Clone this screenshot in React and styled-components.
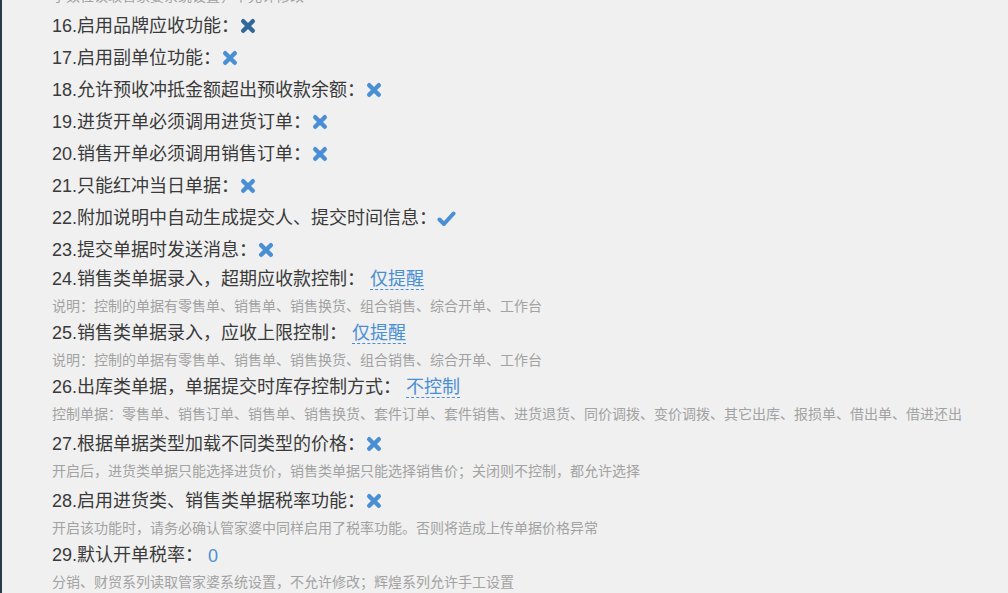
import React from 'react';
import styled, { createGlobalStyle } from 'styled-components';

const GlobalStyle = createGlobalStyle`
  html, body {
    margin: 0;
    padding: 0;
    height: 100%;
    overflow: hidden;
  }
  body {
    background: #f0f0f0;
    font-family: "Liberation Sans", "Noto Sans CJK SC", sans-serif;
  }
`;

const Page = styled.div`
  min-height: 100vh;
  border-left: 2px solid #2b3a49;
  background: #f0f0f0;
  padding-left: 50px;
  box-sizing: border-box;
`;

const List = styled.div`
  margin-top: -16px;
  display: flex;
  flex-direction: column;
`;

const Title = styled.div`
  font-size: 18px;
  color: #3a3a3a;
  line-height: ${(p) => (p.$icon ? '30px' : '29px')};
  padding-top: ${(p) => (p.$icon ? '2px' : '0')};
  white-space: nowrap;
  display: flex;
  align-items: center;
`;

const Desc = styled.div`
  font-size: 14px;
  color: #a2a2a2;
  line-height: 25px;
  white-space: nowrap;
`;

const Editable = styled.span`
  display: inline-block;
  margin-left: 5px;
  line-height: 20px;
  color: #4a8fd4;
  border-bottom: ${(p) => (p.$plain ? 'none' : '1px dashed #4a8fd4')};
`;

const IconWrap = styled.span`
  display: inline-flex;
  align-items: center;
  margin-left: ${(p) => (p.$check ? '0' : '1px')};
  color: ${(p) => (p.$dark ? '#30689b' : '#4a8fd4')};
`;

const Cross = () => (
  <svg width="16" height="16" viewBox="0 0 16 16">
    <path
      d="M3.2 3.2 L12.8 12.8 M12.8 3.2 L3.2 12.8"
      stroke="currentColor"
      strokeWidth="4.4"
      strokeLinecap="round"
      fill="none"
    />
  </svg>
);

const Check = () => (
  <svg width="19" height="17" viewBox="0 0 19 17">
    <path
      d="M2.5 9.5 L7 14 L16.5 3.5"
      stroke="currentColor"
      strokeWidth="4"
      strokeLinecap="round"
      strokeLinejoin="round"
      fill="none"
    />
  </svg>
);

const items = [
  { n: 16, label: '启用品牌应收功能', icon: 'x', dark: true },
  { n: 17, label: '启用副单位功能', icon: 'x' },
  { n: 18, label: '允许预收冲抵金额超出预收款余额', icon: 'x' },
  { n: 19, label: '进货开单必须调用进货订单', icon: 'x' },
  { n: 20, label: '销售开单必须调用销售订单', icon: 'x' },
  { n: 21, label: '只能红冲当日单据', icon: 'x' },
  { n: 22, label: '附加说明中自动生成提交人、提交时间信息', icon: 'check' },
  { n: 23, label: '提交单据时发送消息', icon: 'x' },
  {
    n: 24,
    label: '销售类单据录入，超期应收款控制',
    value: '仅提醒',
    desc: '说明：控制的单据有零售单、销售单、销售换货、组合销售、综合开单、工作台',
  },
  {
    n: 25,
    label: '销售类单据录入，应收上限控制',
    value: '仅提醒',
    desc: '说明：控制的单据有零售单、销售单、销售换货、组合销售、综合开单、工作台',
  },
  {
    n: 26,
    label: '出库类单据，单据提交时库存控制方式',
    value: '不控制',
    desc: '控制单据：零售单、销售订单、销售单、销售换货、套件订单、套件销售、进货退货、同价调拨、变价调拨、其它出库、报损单、借出单、借进还出',
  },
  {
    n: 27,
    label: '根据单据类型加载不同类型的价格',
    icon: 'x',
    desc: '开启后，进货类单据只能选择进货价，销售类单据只能选择销售价；关闭则不控制，都允许选择',
  },
  {
    n: 28,
    label: '启用进货类、销售类单据税率功能',
    icon: 'x',
    desc: '开启该功能时，请务必确认管家婆中同样启用了税率功能。否则将造成上传单据价格异常',
  },
  {
    n: 29,
    label: '默认开单税率',
    value: '0',
    plain: true,
    desc: '分销、财贸系列读取管家婆系统设置，不允许修改；辉煌系列允许手工设置',
  },
];

const App = () => (
  <>
    <GlobalStyle />
    <Page>
      <List>
        <Desc>小数位读取管家婆系统设置，不允许修改</Desc>
        {items.map((it) => (
          <React.Fragment key={it.n}>
            <Title $icon={!!it.icon}>
              <span>
                {it.n}.{it.label}：
              </span>
              {it.icon && (
                <IconWrap $dark={it.dark} $check={it.icon === 'check'}>
                  {it.icon === 'check' ? <Check /> : <Cross />}
                </IconWrap>
              )}
              {it.value && <Editable $plain={it.plain}>{it.value}</Editable>}
            </Title>
            {it.desc && <Desc>{it.desc}</Desc>}
          </React.Fragment>
        ))}
      </List>
    </Page>
  </>
);

export default App;
